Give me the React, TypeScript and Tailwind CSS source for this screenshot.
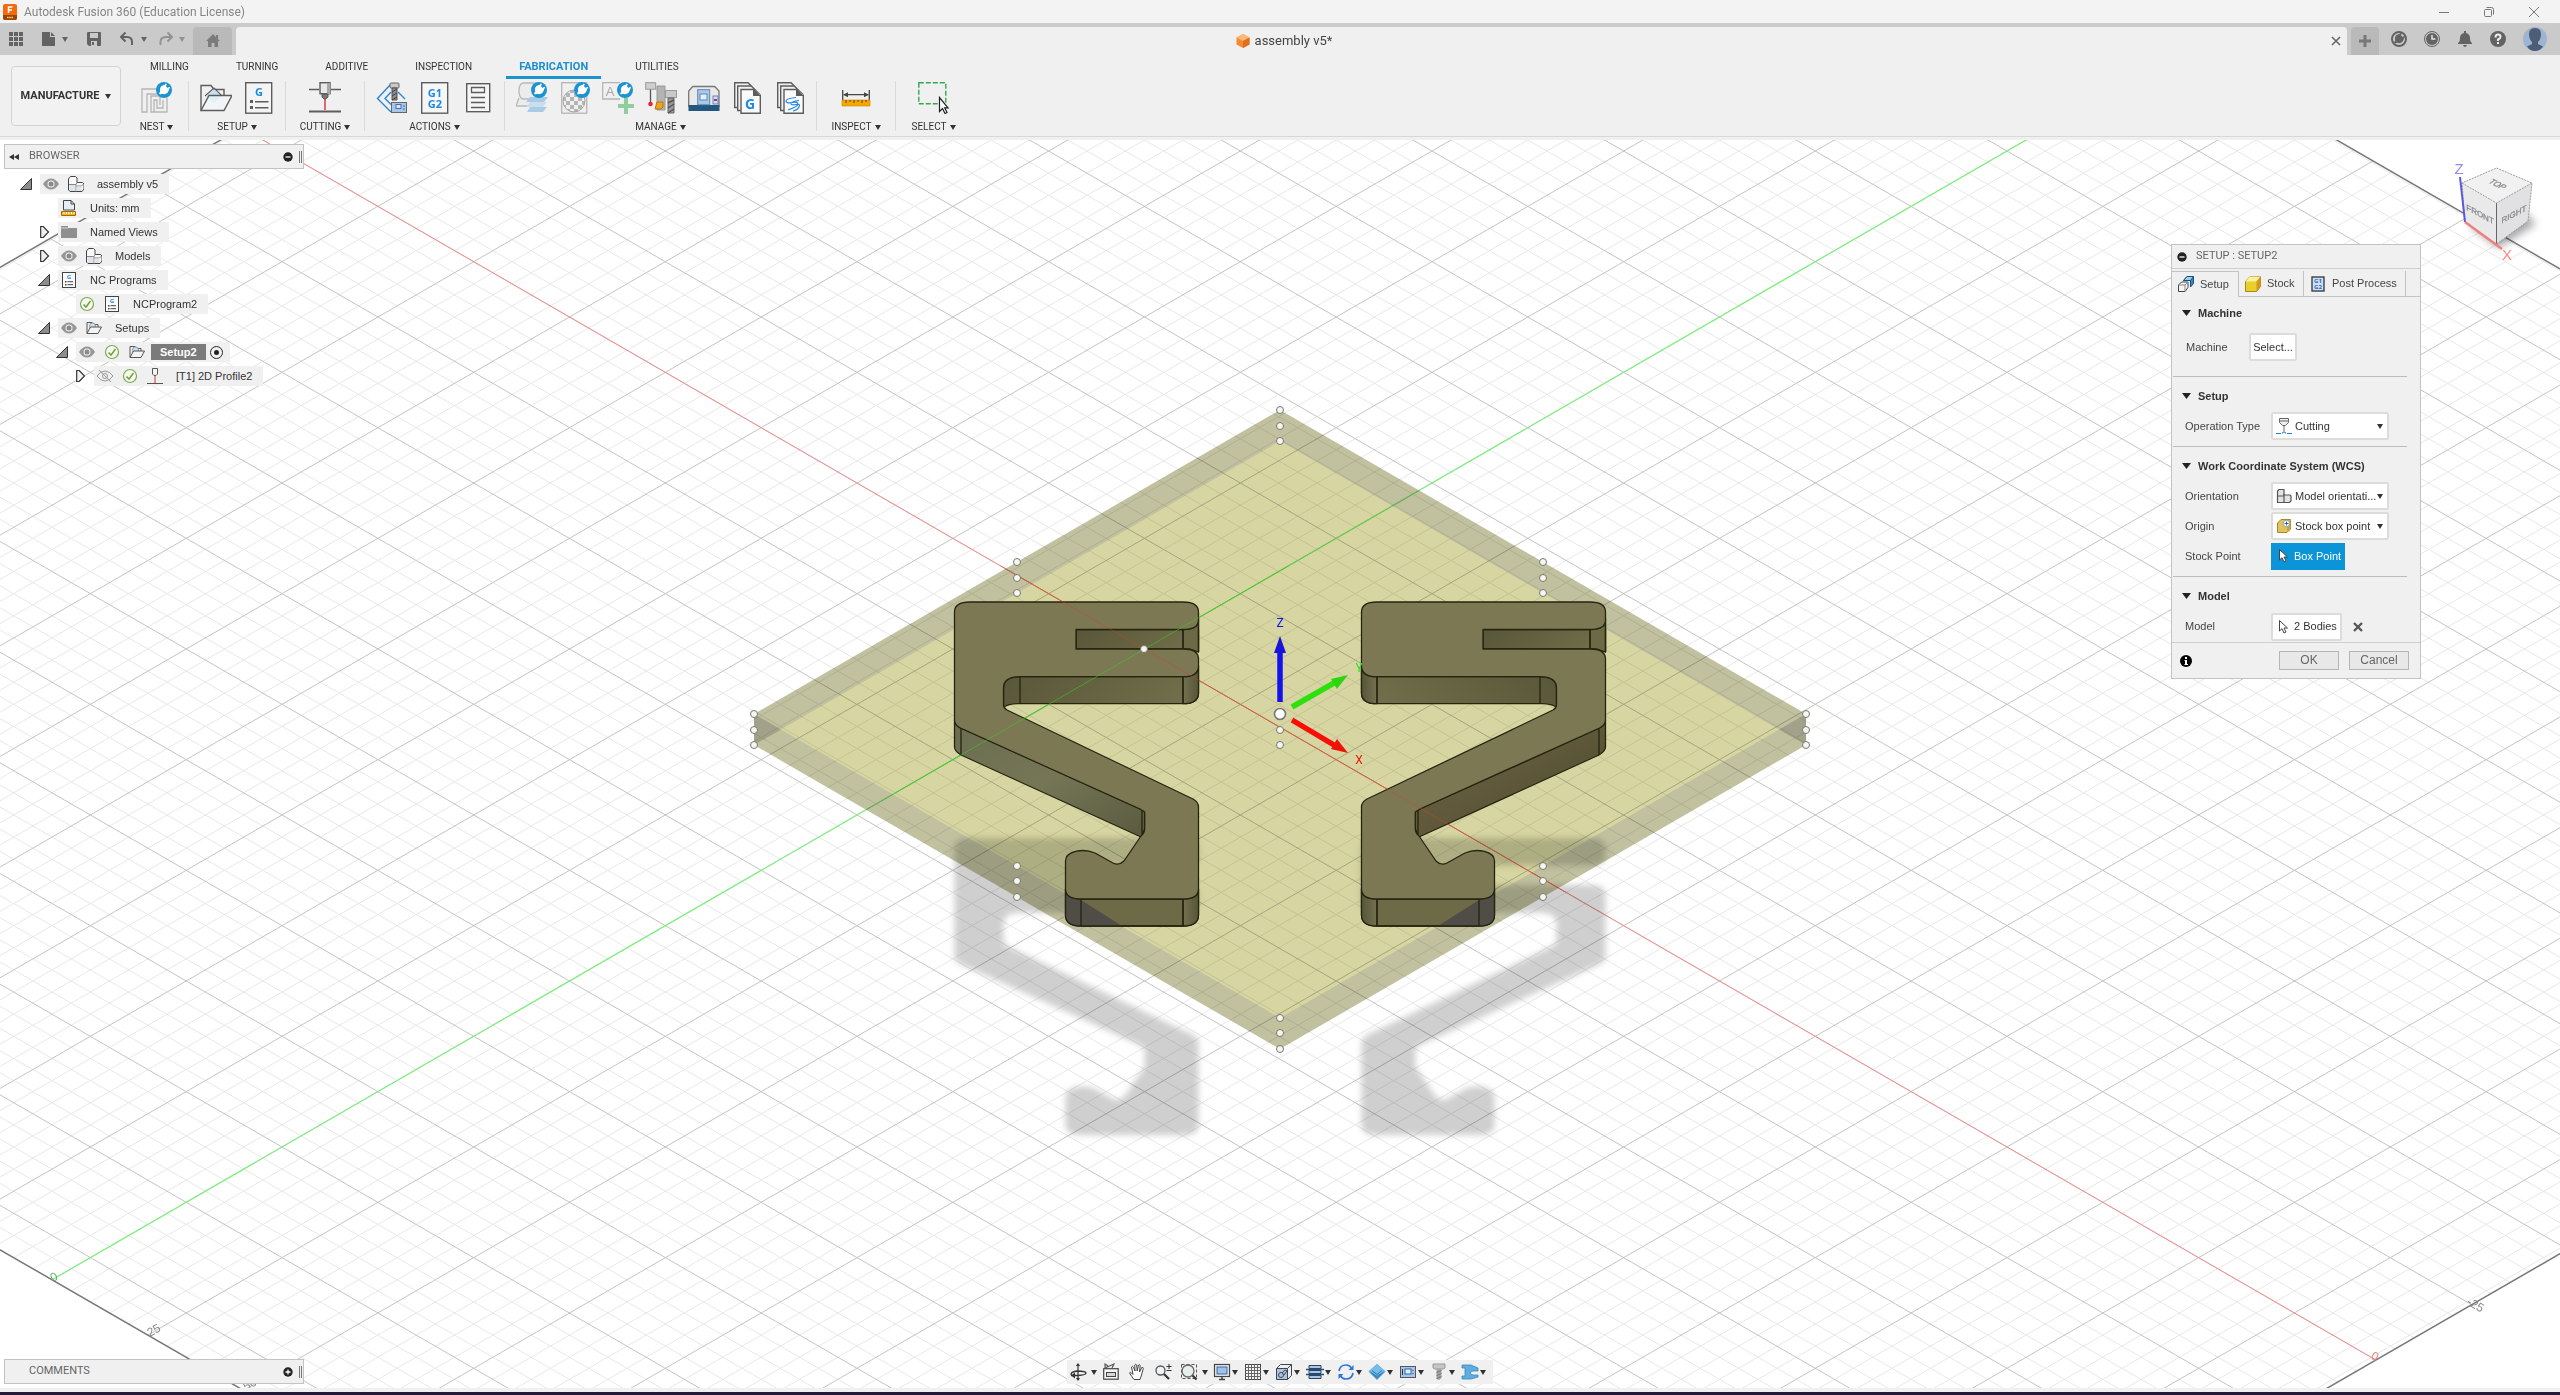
import React from "react";

type Kids = { children?: React.ReactNode };

/* ---------- shared helpers ---------- */

function Svg({ size, className = "", children }: Kids & { size: number; className?: string }) {
  return (
    <svg
      width={size}
      height={size}
      viewBox={"0 0 " + size + " " + size}
      fill="none"
      aria-hidden="true"
      className={"shrink-0 " + className}
    >
      {children}
    </svg>
  );
}

function Caret({ className = "text-[#333]" }: { className?: string }) {
  return (
    <svg width="6" height="5" viewBox="0 0 6 5" aria-hidden="true" className={"shrink-0 " + className}>
      <path d="M0 0h6L3 5z" fill="currentColor" />
    </svg>
  );
}

/* ---------- title bar and document tabs ---------- */

function TitleBar() {
  return (
    <header className="flex h-[23px] shrink-0 items-center bg-[#f3f3f3] pr-5 pl-[3px]">
      <Svg size={16}>
        <rect x="0" y="0" width="14" height="16" rx="2" fill="#f26a0c" />
        <path d="M0 11h14v3a2 2 0 0 1-2 2H2a2 2 0 0 1-2-2z" fill="#9c4300" />
        <path d="M5.500 9V3h4M5.500 6h3.500" stroke="#fff" strokeWidth="1.500" />
        <path d="M4 13.500h6" stroke="#f7c9a0" strokeWidth="1.500" strokeDasharray="1.600 .6" />
      </Svg>
      <h1 className="ml-[5px] font-[Roboto,sans-serif] text-[12px] leading-4 text-[#858585]">
        Autodesk Fusion 360 (Education License)
      </h1>
      <div className="ml-auto flex items-center gap-[33px] text-[#777]">
        <button type="button" aria-label="Minimize">
          <Svg size={12}><path d="M1 6.500h10" stroke="currentColor" /></Svg>
        </button>
        <button type="button" aria-label="Restore">
          <Svg size={12}>
            <rect x="1.500" y="3.500" width="7" height="7" rx="1" stroke="currentColor" />
            <path d="M3.500 1.500h5a2 2 0 0 1 2 2v5" stroke="currentColor" />
          </Svg>
        </button>
        <button type="button" aria-label="Close">
          <Svg size={12}><path d="M1 1l10 10M11 1L1 11" stroke="currentColor" /></Svg>
        </button>
      </div>
    </header>
  );
}

function TabStrip() {
  return (
    <div className="flex h-8 shrink-0 items-end bg-[#cacaca] text-[#636363]">
      <div className="flex h-8 w-[193px] items-center pl-[9px]">
        <button type="button" aria-label="Show data panel">
          <Svg size={14}>
            <path d="M0 0h4v4H0zM5 0h4v4H5zM10 0h4v4h-4zM0 5h4v4H0zM5 5h4v4H5zM10 5h4v4h-4zM0 10h4v4H0zM5 10h4v4H5zM10 10h4v4h-4z" fill="currentColor" />
          </Svg>
        </button>
        <button type="button" aria-label="File" className="ml-[19px] flex items-center gap-[6px]">
          <Svg size={14}>
            <path d="M0 0h8v5h5v9H0z" fill="currentColor" />
            <path d="M9 0l4 4H9z" fill="currentColor" />
          </Svg>
          <Caret className="text-[#636363]" />
        </button>
        <button type="button" aria-label="Save" className="ml-[19px]">
          <Svg size={14}>
            <path d="M0 1a1 1 0 0 1 1-1h12a1 1 0 0 1 1 1v12a1 1 0 0 1-1 1H2l-2-2z" fill="currentColor" />
            <path d="M3 1h8v5H3zM4 9h6v5H4z" fill="#cacaca" />
            <path d="M5 10h2v3H5z" fill="currentColor" />
          </Svg>
        </button>
        <button type="button" aria-label="Undo" className="ml-[19px] flex items-center gap-[7px]">
          <Svg size={14}>
            <path d="M2 5h5q5 0 5 5v3" stroke="currentColor" strokeWidth="2" />
            <path d="M5.500 .5L1 5l4.500 4.500" stroke="currentColor" strokeWidth="2" />
          </Svg>
          <Caret className="text-[#636363]" />
        </button>
        <button type="button" aria-label="Redo" className="ml-3 flex items-center gap-[6px] text-[#929292]">
          <Svg size={14}>
            <path d="M12 5H7Q1.500 5 1.500 10v3" stroke="currentColor" strokeWidth="2" />
            <path d="M8.500 .5L13 5 8.500 9.500" stroke="currentColor" strokeWidth="2" />
          </Svg>
          <Caret className="text-[#929292]" />
        </button>
      </div>
      <button type="button" aria-label="Home" className="flex h-7 w-[39px] items-center justify-center rounded-t bg-[#b9b9b9] text-[#7b7b7b]">
        <Svg size={16}>
          <path d="M8 1l7 7h-2v6H9.500v-4h-3v4H3V8H1z" fill="currentColor" />
          <path d="M11 2h2v4h-2z" fill="currentColor" />
        </Svg>
      </button>
      <div className="ml-1 flex h-7 flex-1 items-center rounded-t bg-[#f0f0f0] pr-[6px]">
        <div className="flex flex-1 items-center justify-center gap-1">
          <Svg size={16}>
            <path d="M8 1l6.500 3.500v7L8 15l-6.500-3.500v-7z" fill="#f58a33" />
            <path d="M8 1l6.500 3.500L8 8 1.500 4.500z" fill="#fbb878" />
            <path d="M8 8l6.500-3.500v7L8 15z" fill="#e06e1b" />
          </Svg>
          <span className="font-[Roboto,sans-serif] text-[13px] leading-4 text-[#444]">assembly v5*</span>
        </div>
        <button type="button" aria-label="Close document">
          <Svg size={10}><path d="M1 1l8 8M9 1L1 9" stroke="currentColor" strokeWidth="1.500" /></Svg>
        </button>
      </div>
      <button type="button" aria-label="New tab" className="ml-1 flex h-7 w-7 items-center justify-center rounded-t bg-[#b9b9b9] text-[#777]">
        <Svg size={14}><path d="M7 1v12M1 7h12" stroke="currentColor" strokeWidth="3" /></Svg>
      </button>
      <div className="flex h-8 items-center gap-[17px] pr-[13px] pl-3">
        <button type="button" aria-label="Extensions">
          <Svg size={16}>
            <circle cx="8" cy="8" r="7" stroke="currentColor" strokeWidth="2" />
            <PlugShape />
          </Svg>
        </button>
        <button type="button" aria-label="Job status">
          <Svg size={16}>
            <circle cx="8" cy="8" r="7.500" stroke="currentColor" />
            <circle cx="8" cy="8" r="6" fill="currentColor" />
            <path d="M8 4v4h3.500" stroke="#e8e8e8" strokeWidth="1.500" />
          </Svg>
        </button>
        <button type="button" aria-label="Notifications">
          <Svg size={16}>
            <path d="M7 0h2v2q4 1 4 5 0 4 2 5v1H1v-1q2-1 2-5 0-4 4-5zM6 14h4q-.5 2-2 2t-2-2z" fill="currentColor" />
          </Svg>
        </button>
        <button type="button" aria-label="Help">
          <Svg size={16}>
            <circle cx="8" cy="8" r="8" fill="currentColor" />
            <path d="M5.500 6.500q0-3 2.500-3t2.500 2.300Q10.500 7.500 8 8.500V10" stroke="#eee" strokeWidth="2" />
            <path d="M7 11h2v2H7z" fill="#eee" />
          </Svg>
        </button>
        <button type="button" aria-label="Account">
          <Svg size={24}>
            <circle cx="12" cy="12" r="12" fill="#9fb4d3" />
            <path d="M6 7q0-6 6-6t6 6q0 5-3 8v2l5 2.500Q17 24 12 24T4 19.500L9 17v-2Q6 12 6 7z" fill="#4c5d78" />
          </Svg>
        </button>
      </div>
    </div>
  );
}

/* ---------- ribbon icons (32 x 32) ---------- */

function PlugShape() {
  return (
    <g>
      <path d="M8.500 2.800l4.700 4.700-1.500 3q-2.500 2.600-5.600 1.300L4 12.500 3 11.300l1.300-1.700q-1.200-3 1.200-5.500z" fill="currentColor" />
      <path d="M8.300 4.800l2-2.800M11 7.400l2.800-2" stroke="currentColor" strokeWidth="1.600" />
    </g>
  );
}

function ExtensionBadge({ x, y = 0 }: { x: number; y?: number }) {
  return (
    <g transform={"translate(" + x + " " + y + ")"} className="text-white">
      <circle cx="8" cy="8" r="8" fill="#1a93cf" />
      <PlugShape />
    </g>
  );
}

const NestIcon = () => (
  <Svg size={32}>
    <path d="M1 30V7h16v5H6v18zM26 16v14H10V14h9v9" stroke="#b5b5b5" strokeWidth="1.300" />
    <path d="M13 30V18h3v8h6v-8" stroke="#b5b5b5" strokeWidth="1.300" />
    <ExtensionBadge x={15} />
  </Svg>
);
const SetupIcon = () => (
  <Svg size={32}>
    <path d="M1 28.500V3.500h10l3 4h10v6" stroke="#5c5c5c" strokeWidth="1.400" />
    <path d="M5 14l9-8 8 8" stroke="#5c5c5c" strokeWidth="1.200" />
    <path d="M6 14l8-7 7 7-7 7z" fill="#bcdcf1" opacity=".8" />
    <path d="M1 28.500L9 13.500h23l-8 15z" stroke="#5c5c5c" strokeWidth="1.400" fill="#f4f8fb" fillOpacity=".6" />
  </Svg>
);
const NcProgramIcon = () => (
  <Svg size={32}>
    <rect x="2.700" y=".7" width="26" height="30.500" stroke="#5c5c5c" strokeWidth="1.400" fill="#f4f4f4" />
    <text x="16" y="14" textAnchor="middle" fontFamily="Open Sans" fontWeight="700" fontSize="11" fill="#1e88d6">G</text>
    <path d="M7 18h3v3H7zM7 24h3v3H7z" fill="#5c5c5c" />
    <path d="M12 19.700h13.500M12 25.700h13.500" stroke="#5c5c5c" strokeWidth="1.400" />
  </Svg>
);
const CuttingIcon = () => (
  <Svg size={32}>
    <path d="M0 7.500h10M22 7.500h10" stroke="#5c5c5c" strokeWidth="1.300" />
    <rect x="11" y=".7" width="10" height="11" fill="#e9e9e9" stroke="#5c5c5c" strokeWidth="1.400" />
    <path d="M18 1h3v11h-3z" fill="#a8a8a8" />
    <path d="M13 12h6v3l-2 2h-2l-2-2z" fill="#777" stroke="#5c5c5c" />
    <path d="M16 17v11" stroke="#d6232b" strokeWidth="1.300" />
    <path d="M0 29.500h32" stroke="#5c5c5c" strokeWidth="2" />
  </Svg>
);
const SimulateIcon = () => (
  <Svg size={32}>
    <path d="M14 3L1.500 16.500 15 30" stroke="#2787d6" strokeWidth="1.400" />
    <path d="M15 10l-6 6.500 6 6M22 10l7 7" stroke="#2787d6" strokeWidth="1.400" />
    <rect x="14" y="1" width="9" height="5" rx="1" fill="#c9c9c9" stroke="#666" />
    <path d="M16 6h5v12h-5z" fill="#8b8b8b" stroke="#555" />
    <path d="M16 10l5-3M16 14l5-3M16 18l5-3" stroke="#444" />
    <rect x="15.500" y="20.500" width="15" height="10" fill="#a9c5e8" stroke="#666" />
    <rect x="20" y="22.500" width="5" height="4" fill="#dbe9f8" stroke="#456fae" />
    <path d="M27 24h2M27 27h2" stroke="#456fae" />
  </Svg>
);
const PostIcon = () => (
  <Svg size={32}>
    <rect x="2.700" y=".7" width="26" height="30.500" stroke="#5c5c5c" strokeWidth="1.400" fill="#f6f6f6" />
    <g fontFamily="Open Sans" fontWeight="700" fontSize="11" fill="#1e88e5" textAnchor="middle">
      <text x="16" y="15">G1</text>
      <text x="16" y="26">G2</text>
    </g>
  </Svg>
);
const SheetIcon = () => (
  <Svg size={32}>
    <rect x="4.700" y="1.700" width="23" height="28" stroke="#5c5c5c" strokeWidth="1.400" fill="#f6f6f6" />
    <path d="M9.500 5.500h13v5h-13zM9 15.500h14M9 20.500h14M9 25.500h14" stroke="#5c5c5c" strokeWidth="1.300" />
  </Svg>
);
const StockLibIcon = () => (
  <Svg size={32}>
    <path d="M20 17H7Q3 16 3 9t4-8h14v15M3 16l-3 8h18" stroke="#b9b9b9" strokeWidth="1.300" fill="#ececec" />
    <path d="M14 15h18l-4 5H10zM14 25h17l-4 5H11z" fill="#a9cbe3" />
    <path d="M14 20h17l-4 5H10z" fill="#c9dfee" />
    <ExtensionBadge x={15} />
  </Svg>
);
const checker: [number, number][] = [];
for (let r = 0; r < 6; r++) for (let c = 0; c < 6; c++) if ((r + c) % 2 === 0) checker.push([c, r]);
const MaterialIcon = () => (
  <Svg size={32}>
    <rect x="2.700" y=".7" width="25" height="30.500" stroke="#b5b5b5" strokeWidth="1.300" />
    <clipPath id="ball"><circle cx="15" cy="19" r="11" /></clipPath>
    <g clipPath="url(#ball)">
      {checker.map(([c, r]) => (
        <rect key={c + "-" + r} x={3 + c * 4} y={7 + r * 4} width="4" height="4" fill="#b5b5b5" />
      ))}
    </g>
    <circle cx="15" cy="19" r="11" stroke="#a6a6a6" />
    <ExtensionBadge x={15} />
  </Svg>
);
const NestTextIcon = () => (
  <Svg size={32}>
    <path d="M18 17H.7V.7H18" stroke="#b5b5b5" strokeWidth="1.300" />
    <text x="8" y="14" textAnchor="middle" fontFamily="Liberation Sans" fontSize="13" fill="#a8a8a8">A</text>
    <path d="M22 16h4v6h6v4h-6v6h-4v-6h-6v-4h6z" fill="#8fcf9f" />
    <ExtensionBadge x={15} />
  </Svg>
);
const ToolLibIcon = () => (
  <Svg size={32}>
    <rect x=".7" y=".7" width="10" height="6.500" fill="#cfcfcf" stroke="#999" />
    <path d="M5.500 7.500v13" stroke="#555" strokeWidth="1.300" />
    <circle cx="5.500" cy="22" r="2.300" fill="#e5262c" />
    <path d="M12 4h8v24h-8z" fill="#b3b3b3" stroke="#999" />
    <path d="M12 20h6v5l-2 2h-6z" fill="#eda420" stroke="#b8770b" />
    <rect x="20.500" y="8.500" width="11" height="7" fill="#c9c9c9" stroke="#999" />
    <path d="M23 16h6v15h-6z" fill="#999" stroke="#666" />
    <path d="M23 21l6-3M23 26l6-4M23 31l6-4" stroke="#555" strokeWidth="1.500" />
  </Svg>
);
const MachineLibIcon = () => (
  <Svg size={32}>
    <path d="M.7 24V9l4-4.500h22L31 9v15z" fill="#e9e9e9" stroke="#777" strokeWidth="1.300" />
    <path d="M.5 23h31v6H.5z" fill="#225780" />
    <rect x="9.700" y="7.700" width="12" height="15" fill="#a9c9ec" stroke="#5f86b5" />
    <rect x="12" y="12" width="7" height="6" fill="#e3effb" stroke="#5f86b5" />
    <rect x="25" y="14" width="5" height="8" fill="#cfe0f2" stroke="#5f86b5" />
    <path d="M26 17h3v2h-3z" fill="#c0267c" />
  </Svg>
);
const PageStack = ({ children }: Kids) => (
  <Svg size={32}>
    <path d="M7 25.500H3.700V.7H17L29.300 13" stroke="#5c5c5c" strokeWidth="1.400" />
    <path d="M10 28.500H6.700V4H20" stroke="#5c5c5c" strokeWidth="1.400" />
    <path d="M29.300 13v18.300H10V7.500h13" stroke="#5c5c5c" strokeWidth="1.400" fill="#fafafa" />
    <path d="M22 6l8 8h-8z" fill="#5c5c5c" />
    {children}
  </Svg>
);
const PostLibIcon = () => (
  <PageStack>
    <text x="19" y="27" textAnchor="middle" fontFamily="Open Sans" fontWeight="700" fontSize="14" fill="#1e88e5">G</text>
  </PageStack>
);
const TemplateIcon = () => (
  <PageStack>
    <path d="M22 15.500q-10 1-10 3.500t6 1.500 6 1.500-10 6M25 18.500q-8 1-8 3t5 1 3 2.500-6 4" stroke="#1e88e5" strokeWidth="1.200" />
  </PageStack>
);
const MeasureIcon = () => (
  <Svg size={32}>
    <path d="M2.700 8v10M29.300 8v10M4 12.700h24" stroke="#444" strokeWidth="1.300" />
    <path d="M3 12.700l5-2.500v5zM29 12.700l-5-2.500v5z" fill="#444" />
    <path d="M2 18h28v6H2z" fill="#f5a800" stroke="#c98500" strokeWidth=".6" />
    <path d="M6 18v3M10 18v2M14 18v3M18 18v2M22 18v3M26 18v2" stroke="#5a3c00" />
  </Svg>
);
const SelectIcon = () => (
  <Svg size={32}>
    <rect x=".8" y=".8" width="27" height="21" stroke="#30a956" strokeWidth="1.400" strokeDasharray="5 2" />
    <path d="M21.500 15.500v14l3-3 2.500 5 2-1-2.300-4.700h3.300z" fill="#fff" stroke="#222" strokeWidth="1.200" />
  </Svg>
);

/* ---------- ribbon ---------- */

const ribbonTabs = ["MILLING", "TURNING", "ADDITIVE", "INSPECTION", "FABRICATION", "UTILITIES"];

type Tool = [string, React.ReactNode];
const groups: { label: string; width: string; tools: Tool[] }[] = [
  { label: "NEST", width: "w-16 border-r", tools: [["Create nest", <NestIcon />]] },
  { label: "SETUP", width: "w-[97px] border-r", tools: [["New setup", <SetupIcon />], ["New NC program", <NcProgramIcon />]] },
  { label: "CUTTING", width: "w-[79px] border-r", tools: [["2D profile", <CuttingIcon />]] },
  { label: "ACTIONS", width: "w-[140px] border-r", tools: [["Simulate", <SimulateIcon />], ["Post process", <PostIcon />], ["Setup sheet", <SheetIcon />]] },
  {
    label: "MANAGE",
    width: "w-[312px] border-r",
    tools: [
      ["Stock library", <StockLibIcon />],
      ["Materials", <MaterialIcon />],
      ["Labels", <NestTextIcon />],
      ["Tool library", <ToolLibIcon />],
      ["Machine library", <MachineLibIcon />],
      ["Post library", <PostLibIcon />],
      ["Template library", <TemplateIcon />],
    ],
  },
  { label: "INSPECT", width: "w-[79px] border-r", tools: [["Measure", <MeasureIcon />]] },
  { label: "SELECT", width: "w-[75px]", tools: [["Select", <SelectIcon />]] },
];

function Ribbon() {
  return (
    <div className="shrink-0 bg-[#f0f0f0] pb-[3px] font-[Roboto,sans-serif]">
      <div className="flex border-b border-[#d8d8d8]">
        <button
          type="button"
          className="mt-[11px] ml-[11px] flex h-[60px] w-[110px] items-center justify-center gap-[6px] rounded border border-[#d3d3d3] bg-[#f2f2f2] text-[11px] font-bold text-[#333]"
        >
          MANUFACTURE <Caret />
        </button>
        <div className="ml-1">
          <nav className="flex gap-[21px] pl-3">
            {ribbonTabs.map((t) =>
              t === "FABRICATION" ? (
                <button key={t} type="button" className="h-6 border-b-[3px] border-[#1a93cf] px-[13px] pt-[2px] text-[11px] leading-[19px] font-bold text-[#1a8fd0]">
                  {t}
                </button>
              ) : (
                <button key={t} type="button" className="h-6 border-b-[3px] border-transparent px-[13px] pt-[2px] text-[10px] leading-[19px] text-[#333]">
                  {t}
                </button>
              ),
            )}
          </nav>
          <div className="mt-[2px] mb-[5px] flex h-[50px]">
            {groups.map((g) => (
              <section key={g.label} aria-label={g.label} className={"flex flex-col items-center border-[#dadada] pt-px " + g.width}>
                <div className="flex gap-[11px]">
                  {g.tools.map(([name, icon]) => (
                    <button key={name} type="button" aria-label={name}>{icon}</button>
                  ))}
                </div>
                <button type="button" className="mt-[5px] flex items-center gap-[3px] text-[10px] leading-4 text-[#333]">
                  {g.label} <Caret />
                </button>
              </section>
            ))}
          </div>
        </div>
      </div>
    </div>
  );
}

/* ---------- 3D scene ---------- */

const iso = (a: number, b: number) =>
  (1144.5 + (a - b) * 95.83).toFixed(1) + " " + (649 + (a + b) * 55.33).toFixed(1);
const A0 = -9.42, A1 = 12.85, B0 = -10.82, B1 = 11.4;
let minorGrid = "";
let majorGrid = "";
for (let i = -47; i <= 64; i++) {
  const line = "M" + iso(i / 5, B0) + "L" + iso(i / 5, B1);
  if (i % 5 === 0) majorGrid += line;
  else minorGrid += line;
}
for (let i = -54; i <= 57; i++) {
  const line = "M" + iso(A0, i / 5) + "L" + iso(A1, i / 5);
  if (i % 5 === 0) majorGrid += line;
  else minorGrid += line;
}
const gridBorder = "M" + iso(A0, B0) + "L" + iso(A1, B0) + "L" + iso(A1, B1) + "L" + iso(A0, B1) + "Z";

const leftTop =
  "M970 602H1183Q1198.500 602 1198.500 612V620Q1198.500 629.500 1183 629.500H1076V649H1183Q1198.500 649 1198.500 659V666Q1198.500 676.700 1183 676.700H1020Q1003.500 676.700 1003.500 688V705Q1003.500 708 1007 710L1193 799Q1198.500 802 1198.500 807V889Q1198.500 899 1183 899H1081Q1065.500 899 1065.500 889V861C1065.500 851 1083 848 1095 853L1113 863Q1119 866 1124 861L1141 836Q1144.700 833 1144.700 829V812L1140 809L960.500 728Q954.500 725 954.500 720V612Q954.500 602 970 602Z";
const rightTop =
  "M1377 602H1590Q1605.500 602 1605.500 612V620Q1605.500 629.500 1590 629.500H1483V649H1590Q1605.500 649 1605.500 659V720Q1605.500 725 1599.500 728L1420 809L1415.300 812V829Q1415.300 833 1419 836L1436 861Q1441 866 1447 863L1465 853C1477 848 1494.500 851 1494.500 861V889Q1494.500 899 1479 899H1377Q1361.500 899 1361.500 889V807Q1361.500 802 1367 799L1553 710Q1556.500 708 1556.500 705V688Q1556.500 676.700 1540 676.700H1377Q1361.500 676.700 1361.500 666V612Q1361.500 602 1377 602Z";

const handles: [number, number][] = [
  [1280, 410], [1280, 426], [1280, 441],
  [1017, 562], [1017, 578], [1017, 593],
  [1543, 562], [1543, 578], [1543, 593],
  [754, 714], [754, 730], [754, 745],
  [1806, 714], [1806, 730], [1806, 745],
  [1017, 866], [1017, 881], [1017, 897],
  [1543, 866], [1543, 881], [1543, 897],
  [1280, 1018], [1280, 1033], [1280, 1049],
  [1280, 730], [1280, 745], [1144, 649],
];

function SlotWalls({ x }: { x: number }) {
  return (
    <g transform={"translate(" + x + " 0)"}>
      <path d="M1076 629.500H1198.500V652L1190 649H1076z" fill="url(#wallH)" />
      <path d="M1183 629.500Q1198.500 629.500 1198.500 620V652L1190 649H1183z" fill="#6c6945" />
      <path d="M1183 629.500V649M1198.500 618V652" />
    </g>
  );
}

function HookWall() {
  return (
    <g>
      <path d="M1065.500 889V915Q1065.500 926 1081 926H1183Q1198.500 926 1198.500 915V889Q1198.500 899 1183 899H1081Q1065.500 899 1065.500 889z" fill="#6d6a48" />
      <path d="M1183 899V926Q1198.500 926 1198.500 915V889Q1198.500 899 1183 899z" fill="url(#cornerWall)" />
      <path d="M1065.500 889V915Q1065.500 926 1081 926H1122L1081 900Q1065.500 899 1065.500 889z" fill="#4f4d45" stroke="none" />
      <path d="M1081 899V926M1183 899V926" />
      <path d="M1065.500 889V915Q1065.500 926 1081 926H1183" />
    </g>
  );
}

function ArmWall() {
  return (
    <g>
      <path d="M1003.500 688V708Q1006 704 1018 703.700H1183Q1198.500 703.700 1198.500 693V666Q1198.500 676.700 1183 676.700H1020Q1003.500 676.700 1003.500 688z" fill="url(#wallH)" />
      <path d="M1183 676.700V703.700Q1198.500 703.700 1198.500 693V666Q1198.500 676.700 1183 676.700z" fill="url(#cornerWall)" />
      <path d="M1020 676.700V703.700M1183 676.700V703.700" />
    </g>
  );
}

function Scene() {
  return (
    <svg
      className="absolute inset-0 h-full w-full"
      viewBox="0 140 2560 1248"
      preserveAspectRatio="xMidYMid slice"
      fill="none"
      role="img"
      aria-label="Model viewport"
    >
      <defs>
        <linearGradient id="wallH" x1="0" x2="1" y1="0" y2=".2">
          <stop offset="0" stopColor="#58563a" />
          <stop offset=".5" stopColor="#646140" />
          <stop offset="1" stopColor="#706d4a" />
        </linearGradient>
        <linearGradient id="cornerWall">
          <stop offset="0" stopColor="#737150" />
          <stop offset="1" stopColor="#57553a" />
        </linearGradient>
        <linearGradient id="wallL" x1="0" x2="1" y1="0" y2="1">
          <stop offset="0" stopColor="#6b6d50" />
          <stop offset=".5" stopColor="#747656" />
          <stop offset="1" stopColor="#595a3f" />
        </linearGradient>
        <linearGradient id="wallR" x1="1" x2="0" y1="0" y2="1">
          <stop offset="0" stopColor="#6d6849" />
          <stop offset=".5" stopColor="#5f583a" />
          <stop offset="1" stopColor="#4b4a2d" />
        </linearGradient>
        <filter id="soft" x="-10%" y="-10%" width="120%" height="120%">
          <feGaussianBlur stdDeviation="3" />
        </filter>
      </defs>

      <rect x="0" y="140" width="2560" height="1248" fill="#fff" />
      <path d={minorGrid} stroke="#e8e8e8" />
      <path d={majorGrid} stroke="#c3c3c3" />
      <path d={gridBorder} stroke="#777" strokeWidth="1.500" />
      <path d={"M" + iso(A0, 0) + "L" + iso(A1, 0)} stroke="#f58e8e" />
      <path d={"M" + iso(0, B0) + "L" + iso(0, B1)} stroke="#7df27d" strokeWidth="1.200" />
      <g fontFamily="Liberation Sans" fontSize="12" fill="#888">
        <text transform="translate(53 1282) rotate(-30)" fill="#5fae5f">0</text>
        <text transform="translate(150 1337) rotate(-30)">25</text>
        <text transform="translate(246 1391) rotate(-30)">50</text>
        <text transform="translate(2466 1304) rotate(30)">-25</text>
        <text transform="translate(2370 1358) rotate(30)" fill="#d88">0</text>
      </g>

      {/* stock block */}
      <g style={{ mixBlendMode: "multiply" }}>
        <path d="M1280 410L1806 714V745L1280 1049L754 745V714z" fill="#c1c1a0" />
        <path d="M1280 441L1779 729.500L1280 1018L781 729.500z" fill="#d7d6a2" />
        <path d="M754 714L781 729.500L754 745zM1806 714L1779 729.500L1806 745z" fill="#a2a189" />
      </g>

      {/* ground shadows */}
      <g style={{ mixBlendMode: "multiply" }} fill="#cfcfcf" filter="url(#soft)">
        <path d={leftTop} transform="translate(0 236)" />
        <path d={rightTop} transform="translate(0 236)" />
      </g>

      {/* bodies */}
      <g stroke="#25240f" strokeWidth="1.300" strokeLinejoin="round">
        <ArmWall />
        <HookWall />
        <path d="M954.500 720V747Q954.500 751 961 755L1141 837L1144.700 829V812L1140 809L960.500 728Q954.500 725 954.500 720z" fill="url(#wallL)" />
        <path d="M961 728V755M1142 811V834" />
        <SlotWalls x={0} />
        <path d={leftTop} fill="#7c7854" />

        <g transform="translate(2560 0) scale(-1 1)">
          <ArmWall />
          <HookWall />
          <path d="M954.500 720V747Q954.500 751 961 755L1141 837L1144.700 829V812L1140 809L960.500 728Q954.500 725 954.500 720z" fill="url(#wallR)" />
          <path d="M961 728V755M1142 811V834" />
        </g>
        <SlotWalls x={407} />
        <path d={rightTop} fill="#7c7854" />
      </g>

      {/* axes seen through the stock */}
      <path d={"M" + iso(-1.5, 0) + "L" + iso(4.4, 0)} stroke="#d8402a" opacity=".45" />
      <path d={"M" + iso(0, -1.5) + "L" + iso(0, 2.6)} stroke="#41c62c" opacity=".6" />

      {/* stock box points */}
      {handles.map(([x, y]) => (
        <circle key={x + "-" + y} cx={x} cy={y} r="3.500" fill="#f6f6f0" stroke="#77776b" />
      ))}
      <circle cx="1280" cy="714" r="5.500" fill="#fff" stroke="#777" strokeWidth="1.600" />

      {/* coordinate triad */}
      <path d="M1280 702V650" stroke="#1410ee" strokeWidth="5.500" />
      <path d="M1280 636l6 17h-12z" fill="#1914d8" />
      <path d="M1292 707L1334 683" stroke="#2fe00f" strokeWidth="5.500" />
      <path d="M1348 675l-17 4 6 10z" fill="#2cd411" />
      <path d="M1292 720L1334 745" stroke="#fb0d06" strokeWidth="5.500" />
      <path d="M1348 753l-11-14-6 10z" fill="#ee1208" />
      <g fontFamily="Roboto" fontSize="12" textAnchor="middle">
        <text x="1280" y="627" fill="#1410ee">Z</text>
        <text x="1359" y="672" fill="#2fe00f">Y</text>
        <text x="1359" y="764" fill="#f0140c">X</text>
      </g>
    </svg>
  );
}

function ViewCube() {
  return (
    <svg
      className="absolute top-3 right-4 h-[116px] w-[100px]"
      viewBox="2444 152 100 116"
      fill="none"
      role="img"
      aria-label="View cube"
    >
      <defs>
        <filter id="cubeShadow" x="-30%" y="-30%" width="160%" height="160%">
          <feGaussianBlur stdDeviation="4" />
        </filter>
      </defs>
      <path d="M2468 224l30 24 38-24-20-20z" fill="#000" opacity=".35" filter="url(#cubeShadow)" />
      <path d="M2496.500 168L2532 183L2528 221L2496.500 244L2465 222L2462 183z" fill="#e9e9ea" />
      <path d="M2496.500 168L2532 183L2496.500 203L2462 183z" fill="#f1f1f2" />
      <path d="M2496.500 203L2532 183L2528 221L2496.500 244z" fill="#e1e1e3" />
      <path d="M2496.500 168L2532 183L2528 221L2496.500 244L2465 222L2462 183zM2462 183L2496.500 203L2532 183" stroke="#888" strokeWidth=".8" strokeDasharray="2 1" />
      <path d="M2496.500 203V244" stroke="#666" />
      <path d="M2460 177L2465 222" stroke="#5a57e0" strokeWidth="2" />
      <path d="M2465 222L2502 249" stroke="#f08080" strokeWidth="2.500" />
      <g fontFamily="Liberation Sans" fontSize="8" fill="#8a8a8d" stroke="#8a8a8d" strokeWidth=".3" textAnchor="middle">
        <text transform="translate(2480 217) skewY(28)">FRONT</text>
        <text transform="translate(2514 217) skewY(-28)">RIGHT</text>
        <text transform="translate(2495 186) rotate(27) skewX(-30)">TOP</text>
      </g>
      <text x="2459" y="174" textAnchor="middle" fontFamily="Liberation Sans" fontSize="15" fill="#8d8af0">Z</text>
      <text x="2507" y="260" textAnchor="middle" fontFamily="Liberation Sans" fontSize="15" fill="#f58a8a">X</text>
    </svg>
  );
}

/* ---------- browser tree ---------- */

const Eye = () => (
  <Svg size={16}>
    <path d="M0 8q3.500-5.500 8-5.500T16 8q-3.500 5.500-8 5.500T0 8z" fill="#979797" />
    <circle cx="8" cy="8" r="3.500" fill="#f0f0f0" />
    <circle cx="8" cy="8" r="2.500" fill="#8a8a8a" />
  </Svg>
);
const EyeOff = () => (
  <Svg size={16}>
    <path d="M0 8q3.500-5 8-5t8 5q-3.500 5-8 5T0 8zM2 2l12 12" stroke="#999" />
    <circle cx="8" cy="8" r="2.500" stroke="#999" />
  </Svg>
);
const Component = () => (
  <Svg size={16}>
    <path d="M.5 3L2.500 .5h5L9 2v4.500h5.500L16 8v5l-2 2.500H2L.5 14z" fill="#fafafa" stroke="#444" />
    <path d="M1 8.500h7l1-2M8 8.500v7M8 10h5.500L15.500 8" stroke="#888" />
    <path d="M8.500 10.500h5V15h-5zM1.500 9H7v6H2z" fill="#dfe3ea" />
  </Svg>
);
const Units = () => (
  <Svg size={16}>
    <path d="M2.500 10V.5H10L13.500 4v6z" fill="#e8edf5" stroke="#444" />
    <path d="M10 .5V4h3.500" stroke="#444" />
    <path d="M.5 11.500h14v4H.5z" fill="#f5b21c" stroke="#a06c00" />
    <path d="M3 12v2M5.500 12v2M8 12v2M10.500 12v2M13 12v2" stroke="#fff" />
  </Svg>
);
const Folder = () => (
  <Svg size={16}><path d="M0 2h7v2h9v10H0z" fill="#8f8f8f" /><path d="M0 4h7" stroke="#d5d5d5" /></Svg>
);
const NcSmall = () => (
  <Svg size={16}>
    <rect x="1.500" y=".5" width="13" height="15" fill="#fafafa" stroke="#444" />
    <text x="8" y="7" textAnchor="middle" fontFamily="Open Sans" fontWeight="700" fontSize="6" fill="#1e88e5">G</text>
    <path d="M4 9h1.500v1.500H4zM4 12h1.500v1.500H4z" fill="#444" />
    <path d="M6.500 9.700H12M6.500 12.700H12" stroke="#444" />
  </Svg>
);
const FolderOpen = () => (
  <Svg size={16}>
    <path d="M1 13.500V2.500h5l1.500 2H12V7" stroke="#555" />
    <circle cx="6.500" cy="6" r="3" fill="#cfe0ee" stroke="#789" strokeWidth=".8" />
    <path d="M1 13.500l3.500-6.500H15.500l-3.500 6.500z" fill="#f2f5f8" stroke="#555" />
  </Svg>
);
const Check = () => (
  <Svg size={16}>
    <circle cx="8" cy="8" r="6.500" stroke="#7ea951" strokeWidth="1.200" fill="#f6faf0" />
    <path d="M4.500 8.500L7 11l4.500-6" stroke="#6fa03c" strokeWidth="1.500" />
  </Svg>
);
const CutSmall = () => (
  <Svg size={16}>
    <path d="M5.500.5h5V6L9 7.500H7L5.500 6z" fill="#f5f5f5" stroke="#555" />
    <path d="M8 8v7" stroke="#c0392b" />
    <path d="M0 15.500h16" stroke="#555" />
  </Svg>
);

type Row = { indent: string; open?: boolean; icons: React.ReactNode; label: string; selected?: boolean };
const rows: Row[] = [
  { indent: "pl-5", open: true, icons: <><Eye /><Component /></>, label: "assembly v5" },
  { indent: "pl-[38px]", icons: <Units />, label: "Units: mm" },
  { indent: "pl-[38px]", open: false, icons: <Folder />, label: "Named Views" },
  { indent: "pl-[38px]", open: false, icons: <><Eye /><Component /></>, label: "Models" },
  { indent: "pl-[38px]", open: true, icons: <NcSmall />, label: "NC Programs" },
  { indent: "pl-14", icons: <><Check /><NcSmall /></>, label: "NCProgram2" },
  { indent: "pl-[38px]", open: true, icons: <><Eye /><FolderOpen /></>, label: "Setups" },
  { indent: "pl-14", open: true, icons: <><Eye /><Check /><FolderOpen /></>, label: "Setup2", selected: true },
  { indent: "pl-[74px]", open: false, icons: <><EyeOff /><Check /><CutSmall /></>, label: "[T1] 2D Profile2" },
];

function Expander({ open }: { open?: boolean }) {
  if (open === undefined) return <span className="w-3" />;
  return (
    <button type="button" aria-label={open ? "Collapse" : "Expand"} aria-expanded={open}>
      <Svg size={12}>
        {open ? (
          <path d="M11.500 .5v11H.5z" fill="#8c8c8c" stroke="#333" />
        ) : (
          <path d="M2.700 .5v11h2.500L10.500 6 5.200 .5z" fill="#f2f2f2" stroke="#333" strokeWidth="1.200" />
        )}
      </Svg>
    </button>
  );
}

function PanelBar({ title, open }: { title: string; open: boolean }) {
  return (
    <div className="flex h-[25px] w-[300px] items-center border border-[#c3c3c3] bg-[#f0f0f0] pr-px pl-1 font-[Roboto,sans-serif] text-[11px] text-[#666]">
      <span className="w-[20px] text-[#333]">
        {open && (
          <Svg size={10}><path d="M5 2v6L0 5zM10 2v6L5 5z" fill="currentColor" /></Svg>
        )}
      </span>
      <h2>{title}</h2>
      <button type="button" aria-label={open ? "Minimize panel" : "Expand panel"} className="ml-auto text-[#222]">
        <Svg size={10}>
          <circle cx="5" cy="5" r="4.700" fill="currentColor" />
          <path d={open ? "M2.500 5h5" : "M2.500 5h5M5 2.500v5"} stroke="#fff" strokeWidth="1.300" />
        </Svg>
      </button>
      <span className="ml-[6px] h-3 w-[3px] border-x border-[#777]" />
    </div>
  );
}

function Tree() {
  return (
    <ul className="mt-[5px] flex flex-col gap-1 font-['Liberation_Sans',sans-serif] text-[11px] text-[#333]">
      {rows.map((r) => (
        <li key={r.label} className={"flex items-center " + r.indent}>
          <Expander open={r.open} />
          <div className={r.selected ? "ml-2 flex h-5 items-center bg-[#f0f0f0] pr-[7px] pl-[3px]" : "ml-2 flex h-5 items-center bg-[#f0f0f0] pr-[11px] pl-[3px]"}>
            <span className="flex gap-[9px]">{r.icons}</span>
            {r.selected ? (
              <>
                <span className="ml-[6px] h-4 bg-[#7b7b7b] px-[9px] leading-4 font-bold text-white">{r.label}</span>
                <label className="ml-1 flex h-[13px] w-[13px] items-center justify-center rounded-full border border-[#222]">
                  <input type="radio" defaultChecked aria-label="Active setup" className="h-[5px] w-[5px] appearance-none rounded-full bg-[#222]" />
                </label>
              </>
            ) : (
              <span className="ml-[13px]">{r.label}</span>
            )}
          </div>
        </li>
      ))}
    </ul>
  );
}

/* ---------- setup dialog ---------- */

function SectionTitle({ title, className }: { title: string; className: string }) {
  return (
    <h3 className={"flex items-center gap-[7px] pl-[9px] text-[11px] font-bold text-[#333] " + className}>
      <svg width="9" height="6" viewBox="0 0 9 6" aria-hidden="true"><path d="M0 0h9L4.500 6z" fill="#222" /></svg>
      {title}
    </h3>
  );
}

function Drop({ id, label, value, icon }: { id: string; label: string; value: string; icon: React.ReactNode }) {
  return (
    <div className="flex h-[30px] items-center pl-3">
      <label htmlFor={id} className="w-[86px]">{label}</label>
      <span className="relative flex items-center">
        <span className="pointer-events-none absolute left-[5px]">{icon}</span>
        <select id={id} defaultValue={value} className="h-7 w-[118px] appearance-none rounded-[2px] border-2 border-[#dcdcdc] bg-white pl-[22px] text-[11px] text-[#333]">
          <option>{value}</option>
        </select>
        <span className="pointer-events-none absolute right-[6px]"><Caret /></span>
      </span>
    </div>
  );
}

const Pointer = () => (
  <Svg size={14}>
    <path d="M2.500 .5v10.500l2.500-2.300 2 4.300 2-1-2-4h3.500z" fill="#fff" stroke="#444" />
  </Svg>
);

function SetupDialog() {
  return (
    <section
      aria-label="Setup"
      className="absolute top-[104px] right-[139px] w-[250px] border border-[#c3c3c3] bg-[#f0f0f0] font-['Liberation_Sans',sans-serif] text-[11px] text-[#444]"
    >
      <header className="flex h-6 items-center gap-[9px] border-b border-[#cfcfcf] pl-[5px] font-[Roboto,sans-serif] text-[#666]">
        <Svg size={10} className="text-[#222]">
          <circle cx="5" cy="5" r="4.700" fill="currentColor" />
          <path d="M2.500 5h5" stroke="#fff" strokeWidth="1.300" />
        </Svg>
        <h2>SETUP : SETUP2</h2>
      </header>
      <div role="tablist" className="mt-[2px] flex h-[26px]">
        <button type="button" role="tab" aria-selected="true" className="flex w-[67px] items-center gap-[6px] border-t border-r border-[#c3c3c3] pb-px pl-[6px]">
          <Svg size={16}>
            <path d="M5.500 4.500L9 .5h6.500v7l-3 3.500V4.500z" fill="#2f8bd1" stroke="#1d4f7a" />
            <path d="M5.500 4.500L9 .5h6.500l-3 4z" fill="#9ed0f2" stroke="#1d4f7a" />
            <path d="M.5 9l3-3H10v5.500l-3 4H.5z" fill="#f5f5f5" stroke="#444" />
            <path d="M.5 9H7l3-3M7 9v6.500" stroke="#888" />
          </Svg>
          Setup
        </button>
        <button type="button" role="tab" aria-selected="false" className="flex w-[65px] items-center gap-[6px] border-r border-b border-[#c3c3c3] pl-[6px]">
          <Svg size={16}>
            <path d="M.5 5.500L5 .5h10.500v10l-4 5H.5z" fill="#e8cf2a" stroke="#a8881a" />
            <path d="M.5 5.500L5 .5h10.500l-4 5z" fill="#f9f1a0" />
            <path d="M11.500 5.500l4-5v10l-4 5z" fill="#d19a1f" />
          </Svg>
          Stock
        </button>
        <button type="button" role="tab" aria-selected="false" className="flex w-[102px] items-center gap-[6px] border-r border-b border-[#c3c3c3] pl-[6px]">
          <Svg size={16}>
            <rect x="2" y="1" width="12" height="14" fill="#cfe0f5" stroke="#333" strokeWidth="1.300" />
            <g fontFamily="Open Sans" fontWeight="700" fontSize="6" fill="#2369c0" textAnchor="middle">
              <text x="8" y="7">G1</text>
              <text x="8" y="13">G2</text>
            </g>
          </Svg>
          Post Process
        </button>
        <span className="flex-1 border-b border-[#c3c3c3]" />
      </div>

      <section className="mr-[13px] ml-px border-b border-[#bdbdbd] pb-[15px]">
        <SectionTitle title="Machine" className="h-8" />
        <div className="flex h-8 items-center pt-1 pl-[13px]">
          <span id="machine-label" className="w-[63px]">Machine</span>
          <button type="button" aria-describedby="machine-label" className="h-7 w-12 rounded-[2px] border-2 border-[#dcdcdc] bg-white text-[#333]">
            Select...
          </button>
        </div>
      </section>

      <section className="mr-[13px] ml-px border-b border-[#bdbdbd] pb-[5px]">
        <SectionTitle title="Setup" className="h-[34px] pt-1" />
        <Drop
          id="operation-type"
          label="Operation Type"
          value="Cutting"
          icon={
            <Svg size={16}>
              <path d="M3.500 .5h9v4l-3 3h-3l-3-3z" fill="#eee" stroke="#666" />
              <path d="M3.500 3h9M8 8v5" stroke="#666" />
              <path d="M0 15.500h5M11 15.500h5" stroke="#2b7fc9" />
              <path d="M6 15h1v-1h2v1h1" stroke="#2b7fc9" />
            </Svg>
          }
        />
      </section>

      <section className="mr-[13px] ml-px border-b border-[#bdbdbd] pb-[5px]">
        <SectionTitle title="Work Coordinate System (WCS)" className="h-[34px] pt-1" />
        <Drop
          id="orientation"
          label="Orientation"
          value="Model orientati..."
          icon={
            <Svg size={16}>
              <path d="M1.500 3l1.500-1.500h5V7H14l1 1v5l-1.500 1.500h-12z" fill="#e2e2e2" stroke="#555" strokeWidth="1.200" />
              <path d="M1.500 8H8v6.500M8 8V6" stroke="#555" strokeWidth="1.200" />
            </Svg>
          }
        />
        <Drop
          id="origin"
          label="Origin"
          value="Stock box point"
          icon={
            <Svg size={16}>
              <path d="M1.500 5L5 1.500h9.500V11L11 14.500H1.500z" fill="#e0c35c" stroke="#a8862a" />
              <path d="M11 5v9.500L14.500 11V1.500z" fill="#c9a33f" />
              <circle cx="10.500" cy="5.500" r="3.300" fill="#fff" stroke="#7d8fa3" strokeWidth=".8" />
              <path d="M10.500 3.500v4M8.500 5.500h4" stroke="#2268b0" />
            </Svg>
          }
        />
        <div className="flex h-[30px] items-center pl-3">
          <span id="stock-point-label" className="w-[86px]">Stock Point</span>
          <button type="button" aria-describedby="stock-point-label" className="flex h-[27px] w-[74px] items-center gap-[3px] bg-[#0c94d8] pl-[6px] text-white">
            <Pointer /> Box Point
          </button>
        </div>
      </section>

      <section className="ml-px">
        <SectionTitle title="Model" className="h-[34px] pt-1" />
        <div className="flex h-[31px] items-center pl-3">
          <span id="model-label" className="w-[86px]">Model</span>
          <button type="button" aria-describedby="model-label" className="flex h-7 w-[71px] items-center gap-[3px] rounded-[2px] border-2 border-[#dcdcdc] bg-white pl-1 text-[#333]">
            <Pointer /> 2 Bodies
          </button>
          <button type="button" aria-label="Clear model selection" className="ml-[11px] text-[#555]">
            <Svg size={10}><path d="M1 1l8 8M9 1L1 9" stroke="currentColor" strokeWidth="2.300" /></Svg>
          </button>
        </div>
      </section>

      <footer className="flex h-9 items-center border-t border-[#cfcfcf] pr-[11px] pl-2 text-[12px]">
        <Svg size={12}>
          <circle cx="6" cy="6" r="6" fill="#000" />
          <path d="M5 2h2v2H5zM4.500 5H7v4h1v1H4.500V9H5V6h-.5z" fill="#fff" />
        </Svg>
        <button type="button" className="ml-auto h-[19px] w-[60px] border border-[#b5b5b5] bg-[#e8e8e8] leading-[17px] text-[#666]">OK</button>
        <button type="button" className="ml-[10px] h-[19px] w-[60px] border border-[#b5b5b5] bg-[#e8e8e8] leading-[17px] text-[#666]">Cancel</button>
      </footer>
    </section>
  );
}

/* ---------- navigation bar (18 x 18 icons) ---------- */

const navItems: { name: string; className: string; menu: boolean; icon: React.ReactNode }[] = [
  {
    name: "Orbit", className: "gap-1", menu: true,
    icon: (
      <>
        <path d="M9 1v16M7.500 3L9 1l1.500 2M7.500 15L9 17l1.500-2" stroke="#333" strokeWidth="1.200" />
        <path d="M3 13Q0 9 8 8q9 0 9 2t-8 2.500H4" stroke="#333" strokeWidth="1.300" />
        <path d="M2 12.500l4-3v6z" fill="#333" />
      </>
    ),
  },
  {
    name: "Look at", className: "ml-[5px]", menu: false,
    icon: (
      <>
        <path d="M3 5l9-4-2 4M3 5V1l3 2" stroke="#555" strokeWidth="1.100" />
        <rect x="1.700" y="5.700" width="14.500" height="10.500" fill="#f5f5f5" stroke="#444" strokeWidth="1.200" />
        <rect x="4.500" y="9.500" width="9" height="4" fill="#d3d8df" stroke="#444" />
      </>
    ),
  },
  {
    name: "Pan", className: "ml-2", menu: false,
    icon: (
      <path
        d="M6 16.500Q4 14 1.500 10q.5-1.500 2 0l1.500 1.500L3.500 4q1-1.500 2 .3L7 8 6.700 2q1-1.500 2 0L9.200 8l1.300-6q1.300-1 1.700.5L11.500 9l2.300-4.500q1.500-.5 1.500 1L13.500 12l-1.500 4.500z"
        fill="#fff" stroke="#444"
      />
    ),
  },
  {
    name: "Zoom", className: "ml-2", menu: false,
    icon: (
      <>
        <circle cx="6.500" cy="7.500" r="4.500" fill="#f0f5f9" stroke="#555" strokeWidth="1.300" />
        <path d="M10 11l5 5" stroke="#333" strokeWidth="2.200" />
        <path d="M15 1v5M12.500 3.500h5M12.500 7.500h5" stroke="#333" />
      </>
    ),
  },
  {
    name: "Fit", className: "ml-2 gap-1", menu: true,
    icon: (
      <>
        <rect x="1.500" y="1.500" width="15" height="14" stroke="#555" strokeDasharray="3 2" />
        <circle cx="8" cy="8" r="6" fill="#e6efee" stroke="#666" strokeWidth="1.300" />
        <path d="M12.500 12.500l4 4" stroke="#333" strokeWidth="2.200" />
      </>
    ),
  },
  {
    name: "Display settings", className: "ml-[5px] gap-px", menu: true,
    icon: (
      <>
        <rect x="1.500" y="1.500" width="15" height="12" fill="#eee" stroke="#444" strokeWidth="1.200" />
        <rect x="4" y="4" width="10" height="7" fill="#9dc1ea" stroke="#3d6aa3" />
        <path d="M6 16.500h6M9 14v2" stroke="#444" strokeWidth="1.500" />
      </>
    ),
  },
  {
    name: "Grid and snaps", className: "ml-[6px] gap-px", menu: true,
    icon: (
      <>
        <rect x="1.500" y="1.500" width="15" height="15" fill="#f4f4f4" stroke="#444" />
        <path d="M4.500 1v16M7.500 1v16M10.500 1v16M13.500 1v16M1 4.500h16M1 7.500h16M1 10.500h16M1 13.500h16" stroke="#666" />
      </>
    ),
  },
  {
    name: "Viewports", className: "ml-[6px] gap-px", menu: true,
    icon: (
      <>
        <path d="M1.500 5.500l4-4h11v11l-4 4h-11z" fill="#e9eef5" stroke="#444" />
        <path d="M1.500 5.500h11v11M12.500 5.500l4-4" stroke="#444" />
        <path d="M2 6h10v10H2z" fill="#a8c4e6" />
        <circle cx="6" cy="12" r="2.500" stroke="#444" />
        <path d="M7 10l3-3 2 1-3 4" stroke="#444" />
      </>
    ),
  },
  {
    name: "Sections", className: "ml-[6px] gap-px", menu: true,
    icon: (
      <>
        <path d="M3 2.500h12v3H3zM3 7.500h12v3H3zM3 12.500h12v3H3z" fill="#a8c4e6" stroke="#345" />
        <path d="M0 6.500h18M0 11.500h18" stroke="#234d80" strokeWidth="1.300" />
      </>
    ),
  },
  {
    name: "Refresh", className: "ml-[6px] gap-px", menu: true,
    icon: (
      <>
        <path d="M2 8q1-6 7-6 4 0 6 4M16 10q-1 6-7 6-4 0-6-4" stroke="#2f76d2" strokeWidth="1.700" />
        <path d="M16.500 2v5h-5zM1.500 16v-5h5z" fill="#2f76d2" />
      </>
    ),
  },
  {
    name: "Stock display", className: "ml-[6px] gap-px", menu: true,
    icon: (
      <>
        <path d="M9 1l8.500 7.500L9 17 .5 8.500z" fill="#4a9bd6" />
        <path d="M9 1l8.500 7.500L9 12 .5 8.500z" fill="#77bbe8" />
        <path d="M2.500 9L9 14.500 15.500 9M4 7.500L9 11.500l5-4" stroke="#3277ad" />
      </>
    ),
  },
  {
    name: "Machine display", className: "ml-[6px] gap-px", menu: true,
    icon: (
      <>
        <rect x="1.500" y="3.500" width="15" height="11" fill="#a9c5e8" stroke="#555" />
        <rect x="6" y="6" width="6" height="5" fill="#e7f0fa" stroke="#2268b0" />
        <path d="M14 7v1M14 10v1M3.500 6v6" stroke="#234" />
      </>
    ),
  },
  {
    name: "Tool display", className: "ml-[6px] gap-px", menu: true,
    icon: (
      <>
        <path d="M3 1h12v4l-2 1H5L3 5z" fill="#c6c6c6" stroke="#999" />
        <path d="M6.500 6h5v9L9 17l-2.500-1z" fill="#a5a5a5" />
        <path d="M6.500 9.500l5-2M6.500 12.500l5-2M6.500 15.500l5-2" stroke="#777" />
      </>
    ),
  },
  {
    name: "Fixture display", className: "ml-[6px] gap-px", menu: true,
    icon: (
      <>
        <path d="M1 2h9l7 3v3h-5q-3 1-3 2t3 2h5v2l-7 2H1v-3h3V5H1z" fill="#5fade0" stroke="#3a87bb" strokeWidth=".8" />
      </>
    ),
  },
];

function NavigationBar() {
  return (
    <div className="absolute inset-x-0 bottom-1 flex justify-center">
      <div role="toolbar" aria-label="Navigation" className="flex h-6 items-center bg-[#f0f0f0] pr-[7px] pl-[2px]">
        {navItems.map((n) => (
          <button key={n.name} type="button" aria-label={n.name} className={"flex items-center " + n.className}>
            <Svg size={18}>{n.icon}</Svg>
            {n.menu && <Caret />}
          </button>
        ))}
      </div>
    </div>
  );
}

export default function App() {
  return (
    <div className="flex h-screen min-h-[800px] flex-col overflow-hidden bg-[#f0f0f0]">
      <TitleBar />
      <TabStrip />
      <Ribbon />
      <main className="relative flex-1 overflow-hidden bg-white">
        <Scene />
        <ViewCube />
        <aside className="absolute top-1 left-1" aria-label="Browser">
          <PanelBar title="BROWSER" open />
          <div className="-ml-1"><Tree /></div>
        </aside>
        <SetupDialog />
        <aside className="absolute bottom-1 left-1" aria-label="Comments">
          <PanelBar title="COMMENTS" open={false} />
        </aside>
        <NavigationBar />
      </main>
      <div className="h-[7px] shrink-0 border-b-[3px] border-[#241a38] bg-[#f0f0f0]" />
    </div>
  );
}
